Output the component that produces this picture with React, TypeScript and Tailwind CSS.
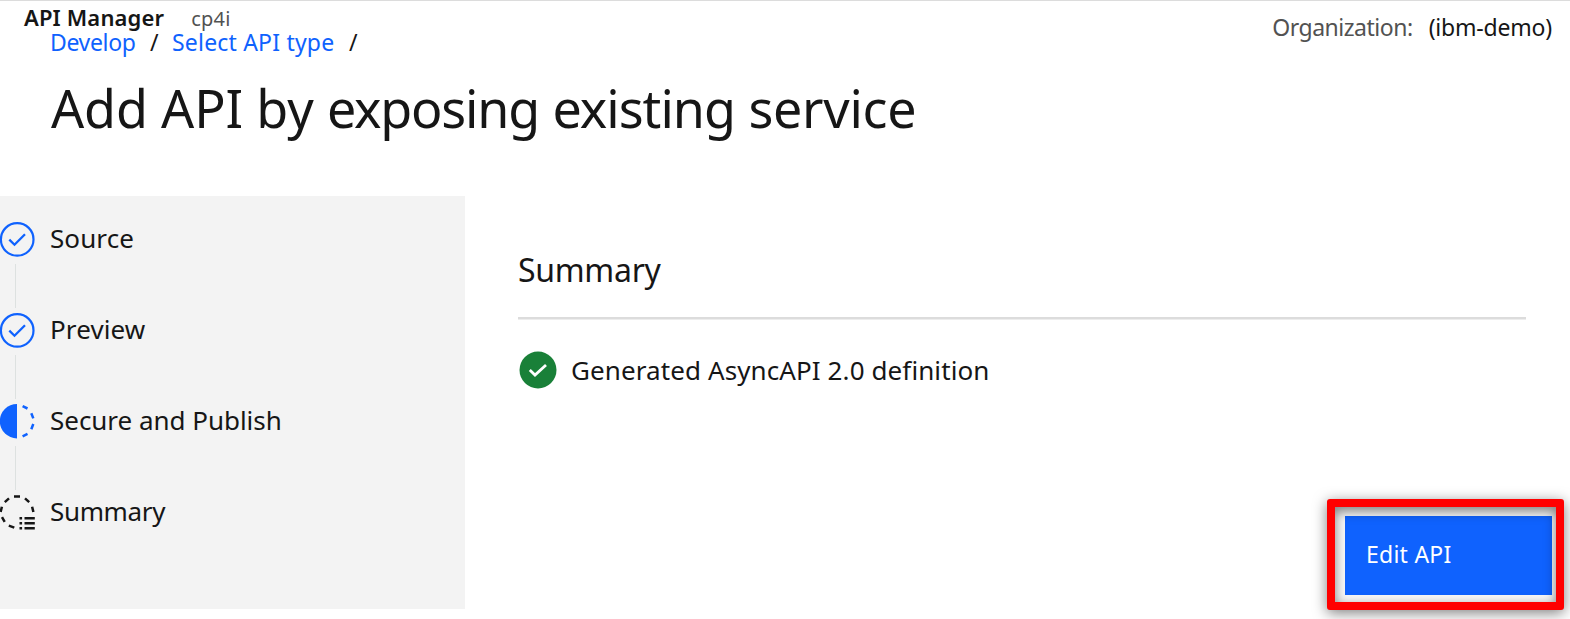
import React from "react";

const steps = [
  { label: "Source", state: "complete", tracking: "tracking-[0.1px]" },
  { label: "Preview", state: "complete", tracking: "tracking-[0.1px]" },
  { label: "Secure and Publish", state: "current", tracking: "tracking-[-0.03px]" },
  { label: "Summary", state: "upcoming", tracking: "tracking-[-0.35px]" },
];

function StepIcon({ state }: { state: string }) {
  if (state === "complete") {
    return (
      <svg className="size-9 shrink-0" viewBox="0 0 36 36" fill="none" stroke="#0f62fe">
        <circle cx="17.2" cy="18.4" r="16.3" strokeWidth="2.2" />
        <path d="M9.3 18.6l5.2 5.1L25 13.2" strokeWidth="2.3" />
      </svg>
    );
  }
  if (state === "current") {
    return (
      <svg className="size-9 shrink-0" viewBox="0 0 36 36" fill="none" stroke="#0f62fe" strokeWidth="2.5">
        <path d="M17 1a17.2 17.2 0 0 0 0 34.4z" fill="#0f62fe" stroke="none" />
        <path d="M22.6 3.2l4.9 2.3M31.3 10.2l2 5.2M33.3 21l-2 5.2M27.5 30.9l-4.9 2.4" />
      </svg>
    );
  }
  return (
    <svg className="size-9 shrink-0" viewBox="0 0 36 36" fill="none" stroke="#161616" strokeWidth="2.5">
      <path d="M14 2.4h6M25 4.4l4.2 3.7M32.1 12.7l1.3 5.3M9 4.4L4.8 8.1M1.9 12.7L.6 18M2 23.2l2.7 4.6M8.8 31.7l5.5 2" />
      <path d="M24.5 24.3h10.3M24.5 29.3h10.3M24.5 34.3h10.3M19.5 24.3h2.6M19.5 29.3h2.6M19.5 34.3h2.6" />
    </svg>
  );
}

export default function App() {
  return (
    <div className="flex h-[619px] w-[1570px] flex-col overflow-hidden border-t border-[#dcdcdc] bg-white font-['Noto_Sans',sans-serif] text-[#161616]">
      <header className="flex h-[195px] shrink-0 justify-between">
        <div className="flex flex-col whitespace-nowrap">
          <div className="flex h-[29px] items-baseline gap-[27px] pt-[2px] pl-6 leading-[29px]">
            <span className="text-[22px] font-semibold tracking-[0.15px]">API Manager</span>
            <span className="text-[20px] tracking-[0.2px] text-[#525252]">cp4i</span>
          </div>
          <nav className="flex pl-[50px] text-[23px] leading-6">
            <a className="w-[100px] tracking-[-0.35px] text-[#0f62fe]">Develop</a>
            <span className="w-[22px]">/</span>
            <a className="w-[177px] tracking-[0.2px] text-[#0f62fe]">Select API type</a>
            <span>/</span>
          </nav>
          <h1 className="mt-[22px] pl-[51px] text-[52px] leading-[64px]">
            <span className="tracking-[-0.15px]">Add API by </span>
            <span className="tracking-[-1.2px]">exposing</span>{" "}
            <span className="tracking-[-1px]">existing</span>{" "}
            <span className="tracking-[-0.3px]">service</span>
          </h1>
        </div>
        <div className="flex gap-4 pt-[11px] pr-[18px] text-[23px] leading-[30px] whitespace-nowrap">
          <span className="tracking-[-0.48px] text-[#525252]">Organization:</span>
          <span className="tracking-[-0.2px]">(ibm-demo)</span>
        </div>
      </header>
      <div className="flex h-[413px]">
        <aside className="w-[465px] shrink-0 bg-[#f3f3f3] pt-[25px]">
          {steps.map((step, i) => (
            <div key={step.label} className="h-[91px]">
              <div className="flex h-9 items-start gap-[14px]">
                <StepIcon state={step.state} />
                <span className={`text-[26px] leading-[35px] ${step.tracking}`}>{step.label}</span>
              </div>
              {i < 3 && <div className="mt-[7px] ml-[15px] h-[44px] w-px bg-[#dde1e0]" />}
            </div>
          ))}
        </aside>
        <main className="flex grow flex-col pl-[53px]">
          <h2 className="mt-[52px] shrink-0 text-[32px] leading-[44px] tracking-[-0.3px]">Summary</h2>
          <div className="mt-[25px] h-[3px] w-[1008px] shrink-0 border-b border-[#ededed] bg-[#dcdcdc]" />
          <div className="mt-[31px] flex h-[38px] shrink-0 items-center gap-[13px]">
            <svg className="size-10 shrink-0" viewBox="0 0 40 40">
              <circle cx="20" cy="20" r="18.5" fill="#198038" />
              <path d="M11.8 20l5.2 5L28 15" fill="none" stroke="#fff" strokeWidth="2.8" />
            </svg>
            <span className="text-[26px] leading-9 tracking-[0.1px]">Generated AsyncAPI 2.0 definition</span>
          </div>
          <div className="mt-[110px] mr-[6px] h-[111px] w-[237px] shrink-0 self-end rounded-[3px] border-8 border-[#ff0000] bg-[#f8f8f8] pt-[9px] pr-[5px] pb-[7px] pl-[10px] shadow-[0_3px_14px_rgba(0,0,0,0.5)]">
            <div className="relative">
              <button className="block h-[79px] w-[207px] bg-[#0f62fe] pb-[2px] pl-[21px] text-left text-[23px] tracking-[0.25px] text-white">
                Edit API
              </button>
              <div className="pointer-events-none absolute -top-[9px] -left-[10px] h-[95px] w-[221px] shadow-[inset_0_4px_12px_rgba(0,0,0,0.5)]" />
            </div>
          </div>
        </main>
      </div>
    </div>
  );
}
